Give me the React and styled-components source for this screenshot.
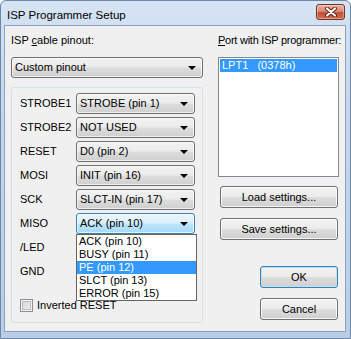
import { Fragment } from 'react';
import styled, { createGlobalStyle } from 'styled-components';

const GlobalStyle = createGlobalStyle`
  html, body {
    margin: 0;
    padding: 0;
    background: #ffffff;
  }
  body {
    font-family: "Liberation Sans", Arial, sans-serif;
    font-size: 11px;
    color: #000;
  }
`;

const Window = styled.div`
  width: 351px;
  height: 339px;
  box-sizing: border-box;
  display: flex;
  flex-direction: column;
  background: linear-gradient(#d6e4f3 0%, #c4d7ec 30%, #b9cee6 100%);
  border: 1px solid #6d87a8;
  border-radius: 6px 6px 0 0;
  padding: 0 4px 6px 3px;
`;

const TitleBar = styled.div`
  height: 24px;
  display: flex;
  align-items: flex-start;
  justify-content: space-between;
  padding-right: 1px;
`;

const Title = styled.span`
  font-size: 11.5px;
  line-height: 13px;
  padding: 8px 0 0 3px;
  color: #000;
`;

const CloseButton = styled.div`
  width: 29px;
  height: 16px;
  margin-top: 3px;
  box-sizing: border-box;
  border: 1px solid #6f3326;
  border-radius: 3px;
  background: linear-gradient(#eab3a5 0%, #d98b76 45%, #c24f33 55%, #d0704f 100%);
  box-shadow: inset 0 0 0 1px rgba(255, 255, 255, 0.35);
  display: flex;
  align-items: center;
  justify-content: center;
`;

const Client = styled.div`
  flex: 1;
  display: flex;
  gap: 15px;
  background: #f0f0f0;
  border: 1px solid #8da3bf;
  padding: 8px 6px 0 6px;
`;

const LeftColumn = styled.div`
  width: 192px;
  display: flex;
  flex-direction: column;
`;

const RightColumn = styled.div`
  width: 121px;
  display: flex;
  flex-direction: column;
  align-items: flex-end;
`;

const FieldLabel = styled.div`
  align-self: stretch;
  height: 13px;
  line-height: 13px;
  margin-bottom: 10px;
  white-space: nowrap;
  letter-spacing: ${(p) => (p.$tight ? '-0.25px' : 'normal')};
`;

const Key = styled.span`
  text-decoration: underline;
`;

const Combo = styled.div`
  position: relative;
  width: ${(p) => p.$width || '100%'};
  height: 21px;
  box-sizing: border-box;
  border: 1px solid ${(p) => (p.$focused ? '#3c7fb1' : '#707070')};
  border-radius: 3px;
  background: ${(p) =>
    p.$focused
      ? 'linear-gradient(#eaf6fd 0%, #d9f0fc 48%, #bee6fd 52%, #a7d9f5 100%)'
      : 'linear-gradient(#f2f2f2 0%, #ebebeb 48%, #dddddd 52%, #cfcfcf 100%)'};
  box-shadow: inset 0 0 0 1px rgba(255, 255, 255, 0.7);
  display: flex;
  align-items: center;
  padding: 0 6px 0 3px;
  line-height: 13px;
  white-space: nowrap;
`;

const ComboText = styled.span`
  flex: 1;
`;

const Arrow = styled.span`
  width: 0;
  height: 0;
  border-left: 4px solid transparent;
  border-right: 4px solid transparent;
  border-top: 4px solid #000;
  margin-top: 1px;
`;

const GroupBox = styled.div`
  margin-top: 9px;
  height: 236px;
  box-sizing: border-box;
  border: 1px solid #d5dfe5;
  border-radius: 3px;
  padding: 5px 7px 0 8px;
  display: flex;
  flex-direction: column;
`;

const PinGrid = styled.div`
  display: grid;
  grid-template-columns: 56px 119px;
  row-gap: 3px;
  align-items: center;
`;

const PinLabel = styled.span`
  line-height: 13px;
`;

const DropList = styled.div`
  position: absolute;
  left: -1px;
  top: 20px;
  width: 121px;
  box-sizing: border-box;
  background: #fff;
  border: 1px solid #646464;
  z-index: 2;
`;

const DropItem = styled.div`
  height: 13px;
  line-height: 13px;
  padding-left: 2px;
  background: ${(p) => (p.$selected ? '#3399ff' : '#fff')};
  color: ${(p) => (p.$selected ? '#fff' : '#000')};
`;

const CheckRow = styled.label`
  margin-top: 17px;
  display: flex;
  align-items: center;
  gap: 4px;
  line-height: 13px;
`;

const CheckBox = styled.span`
  width: 13px;
  height: 13px;
  box-sizing: border-box;
  border: 1px solid #8f8f8f;
  background: linear-gradient(135deg, #cfd2d6 0%, #f4f4f4 100%);
  box-shadow: inset 0 0 0 1px #f4f4f4, inset 0 0 0 2px #b8bcc2;
`;

const ListBox = styled.div`
  align-self: stretch;
  height: 120px;
  box-sizing: border-box;
  background: #fff;
  border: 1px solid #828790;
  padding: 1px;
`;

const ListItem = styled.div`
  height: 13px;
  line-height: 13px;
  padding-left: 2px;
  white-space: pre;
  background: ${(p) => (p.$selected ? '#3399ff' : 'transparent')};
  color: ${(p) => (p.$selected ? '#fff' : '#000')};
`;

const Button = styled.div`
  width: ${(p) => p.$width};
  height: 22px;
  margin-top: ${(p) => p.$top};
  margin-right: 1px;
  box-sizing: border-box;
  border: 1px solid ${(p) => (p.$default ? '#3c7fb1' : '#707070')};
  border-radius: 3px;
  background: linear-gradient(#f2f2f2 0%, #ebebeb 48%, #dddddd 52%, #cfcfcf 100%);
  box-shadow: inset 0 0 0 1px ${(p) => (p.$default ? '#b8e3f8' : 'rgba(255,255,255,0.8)')};
  display: flex;
  align-items: center;
  justify-content: center;
  line-height: 13px;
`;

const pins = [
  { name: 'STROBE1', value: 'STROBE (pin 1)' },
  { name: 'STROBE2', value: 'NOT USED' },
  { name: 'RESET', value: 'D0 (pin 2)' },
  { name: 'MOSI', value: 'INIT (pin 16)' },
  { name: 'SCK', value: 'SLCT-IN (pin 17)' },
  { name: 'MISO', value: 'ACK (pin 10)', open: true },
  { name: '/LED', value: '' },
  { name: 'GND', value: '' },
];

const choices = ['ACK (pin 10)', 'BUSY (pin 11)', 'PE (pin 12)', 'SLCT (pin 13)', 'ERROR (pin 15)'];

function CloseIcon() {
  return (
    <svg width="12" height="10" viewBox="0 0 12 10">
      <path d="M2 1.5 L10 8.5 M10 1.5 L2 8.5" stroke="#5a1e12" strokeWidth="4" strokeLinecap="round" />
      <path d="M2 1.5 L10 8.5 M10 1.5 L2 8.5" stroke="#ffffff" strokeWidth="2.2" strokeLinecap="round" />
    </svg>
  );
}

export default function App() {
  return (
    <>
      <GlobalStyle />
      <Window>
        <TitleBar>
          <Title>ISP Programmer Setup</Title>
          <CloseButton>
            <CloseIcon />
          </CloseButton>
        </TitleBar>
        <Client>
          <LeftColumn>
            <FieldLabel>
              ISP <Key>c</Key>able pinout:
            </FieldLabel>
            <Combo>
              <ComboText>Custom pinout</ComboText>
              <Arrow />
            </Combo>
            <GroupBox>
              <PinGrid>
                {pins.map((pin) => (
                  <Fragment key={pin.name}>
                    <PinLabel>{pin.name}</PinLabel>
                    <Combo $focused={pin.open}>
                      <ComboText>{pin.value}</ComboText>
                      <Arrow />
                      {pin.open && (
                        <DropList>
                          {choices.map((c) => (
                            <DropItem key={c} $selected={c === 'PE (pin 12)'}>
                              {c}
                            </DropItem>
                          ))}
                        </DropList>
                      )}
                    </Combo>
                  </Fragment>
                ))}
              </PinGrid>
              <CheckRow>
                <CheckBox />
                Inverted RESET
              </CheckRow>
            </GroupBox>
          </LeftColumn>
          <RightColumn>
            <FieldLabel $tight>
              <Key>P</Key>ort with ISP programmer:
            </FieldLabel>
            <ListBox>
              <ListItem $selected>{'LPT1   (0378h)'}</ListItem>
            </ListBox>
            <Button $width="118px" $top="9px">Load settings...</Button>
            <Button $width="118px" $top="10px">Save settings...</Button>
            <Button $width="78px" $top="26px" $default>OK</Button>
            <Button $width="78px" $top="10px">Cancel</Button>
          </RightColumn>
        </Client>
      </Window>
    </>
  );
}
